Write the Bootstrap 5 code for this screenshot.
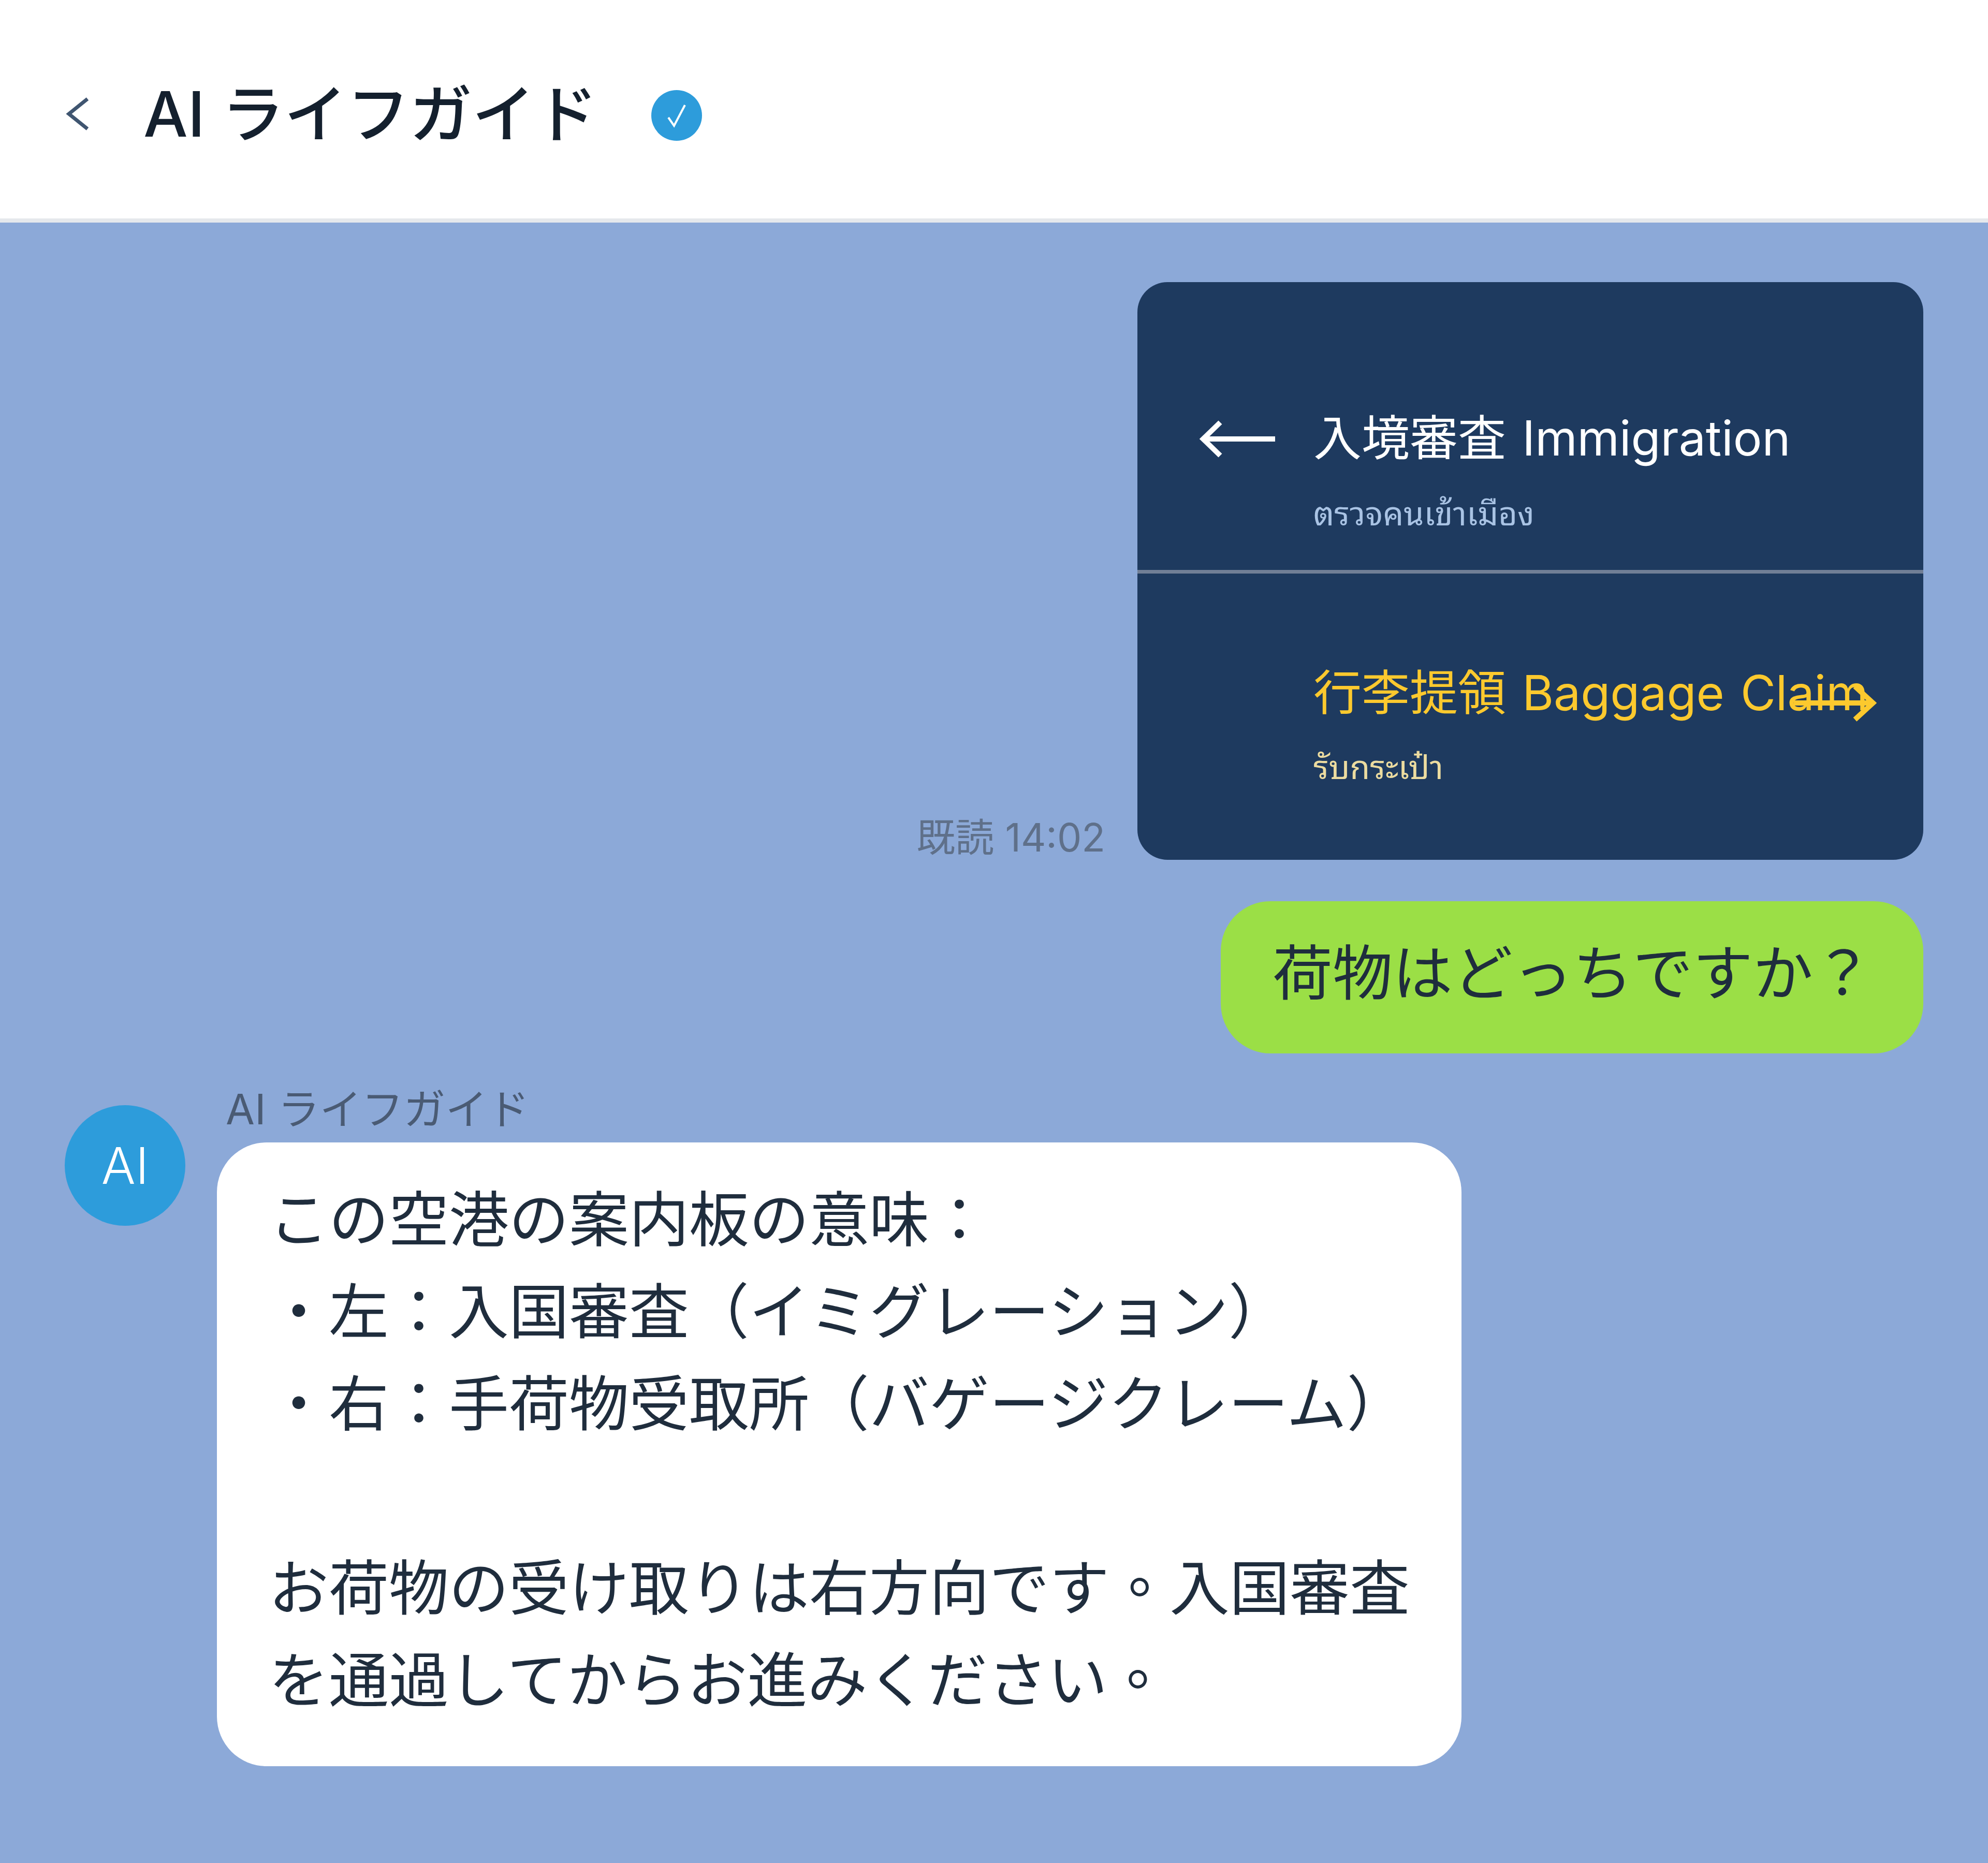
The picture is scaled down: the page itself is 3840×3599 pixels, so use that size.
<!DOCTYPE html>
<html lang="ja">
<head>
    <meta charset="UTF-8">
    <meta name="viewport" content="width=device-width, initial-scale=1.0">
    <title>AI ライフガイド</title>

    <link href="https://cdn.jsdelivr.net/npm/bootstrap@5.3.0/dist/css/bootstrap.min.css" rel="stylesheet">
    <style>
        body {
            font-family: Inter, "Noto Sans CJK JP", "Noto Sans", sans-serif;
            background: #8ca9d8;
            min-height: 3599px;
            color: #1f2d3d;
            text-spacing-trim: space-all;
        }
        .top-bar { height: 430px; background: #fff; border-bottom: 8px solid #e5e8ec; padding: 18px 0 0 127px; }
        .back-icon { width: 46px; height: 64px; margin-right: 104px; }
        .top-title { font-size: 121px; font-weight: 500; color: #14202e; line-height: 1; }
        .verified { width: 98px; height: 98px; background: #2d9cdb; margin-left: 104px; margin-top: 6px; }
        .chat-area { padding: 115px 125px 0; }
        .read-mark { font-size: 75px; line-height: 1.2; color: #5f708a; margin: 0 62px -2px 0; }
        .sign-board { width: 1518px; height: 1116px; background: #1e3a5f; border-radius: 58px; }
        .sign-row { padding-left: 120px; height: 556px; padding-bottom: 76px; }
        .sign-row + .sign-row { height: 560px; border-top: 7px solid #717f96; padding-bottom: 146px; }
        .arrow-left { width: 146px; height: 84px; margin: 0 74px 135px 0; flex-shrink: 0; }
        .sign-main { font-size: 93px; line-height: 1.2; color: #fff; white-space: nowrap; word-spacing: 5px; }
        .sign-sub { font-size: 63px; line-height: 1.2; color: #a9c3e4; margin-top: 47px; font-family: "Noto Sans Thai Looped", "Noto Serif Thai", Loma, Garuda, "Noto Sans", sans-serif; }
        .sign-yellow .sign-main { color: #fcc92e; }
        .sign-yellow .sign-sub { color: #ecdca0; margin-top: 45px; }
        .sign-yellow .sign-text { margin-left: 220px; }
        .arrow-right { position: absolute; left: 1268px; top: 208px; width: 160px; height: 84px; }
        .bubble-mine { background: #9bdf46; border-radius: 96px; padding: 0 97px 16px 100px; height: 294px; margin-top: 80px; font-size: 116px; white-space: nowrap; }
        .incoming { margin-top: 100px; }
        .ai-avatar { width: 233px; height: 233px; background: #2d9cdb; color: #fff; font-size: 98px; font-weight: 300; margin-right: 61px; flex-shrink: 0; }
        .sender { font-size: 81px; line-height: 1; color: #4a5b74; padding-left: 17px; margin-top: -32px; height: 104px; }
        .bubble-ai { width: 2404px; height: 1205px; background: #fff; border-radius: 96px; padding: 60px 60px 0 100px; font-size: 116px; line-height: 178px; white-space: pre-line; }
        .mid-stop { font-family: "Noto Sans CJK TC", sans-serif; line-height: 0; }
    </style>
</head>
<body>

    <!-- Header -->
    <div class="top-bar d-flex align-items-center">
        <svg class="back-icon" viewBox="0 0 46 64" fill="none" stroke="#3f5570" stroke-width="7"><path d="M42 3 L6 32 L42 61"/></svg>
        <span class="top-title">AI ライフガイド</span>
        <span class="verified rounded-circle d-flex align-items-center justify-content-center">
            <svg width="44" height="48" viewBox="0 0 44 48" fill="none" stroke="#fff" stroke-width="4"><path d="M6 28 L17 44 L38 4"/></svg>
        </span>
    </div>

    <div class="chat-area">
        <!-- Sign card -->
        <div class="d-flex justify-content-end align-items-end">
            <div class="read-mark">既読 14:02</div>
            <div class="sign-board overflow-hidden">
                <div class="sign-row d-flex align-items-end">
                    <svg class="arrow-left" viewBox="0 0 146 84" fill="none" stroke="#fff" stroke-width="10"><path d="M146 42 H6 M40 10 L7 42 L40 74"/></svg>
                    <div class="sign-text">
                        <div class="sign-main">入境審査 Immigration</div>
                        <div class="sign-sub">ตรวจคนเข้าเมือง</div>
                    </div>
                </div>
                <div class="sign-row sign-yellow d-flex align-items-end position-relative">
                    <div class="sign-text">
                        <div class="sign-main">行李提領 Baggage Claim</div>
                        <div class="sign-sub">รับกระเป๋า</div>
                    </div>
                    <svg class="arrow-right" viewBox="0 0 160 84" fill="none" stroke="#fcc92e" stroke-width="10"><path d="M0 42 H152 M118 10 L153 42 L118 74"/></svg>
                </div>
            </div>
        </div>

        <!-- My message -->
        <div class="d-flex justify-content-end">
            <div class="bubble-mine d-flex align-items-center">荷物はどっちですか？</div>
        </div>

        <!-- AI message -->
        <div class="incoming d-flex align-items-start">
            <div class="ai-avatar rounded-circle d-flex align-items-center justify-content-center">AI</div>
            <div>
                <div class="sender">AI ライフガイド</div>
                <div class="bubble-ai">この空港の案内板の意味：
・左：入国審査（イミグレーション）
・右：手荷物受取所（バゲージクレーム）

お荷物の受け取りは右方向です<span class="mid-stop" lang="zh-TW">。</span>入国審査を通過してからお進みください<span class="mid-stop" lang="zh-TW">。</span></div>
            </div>
        </div>
    </div>

    <script src="https://cdn.jsdelivr.net/npm/bootstrap@5.3.0/dist/js/bootstrap.bundle.min.js"></script>
</body>
</html>
